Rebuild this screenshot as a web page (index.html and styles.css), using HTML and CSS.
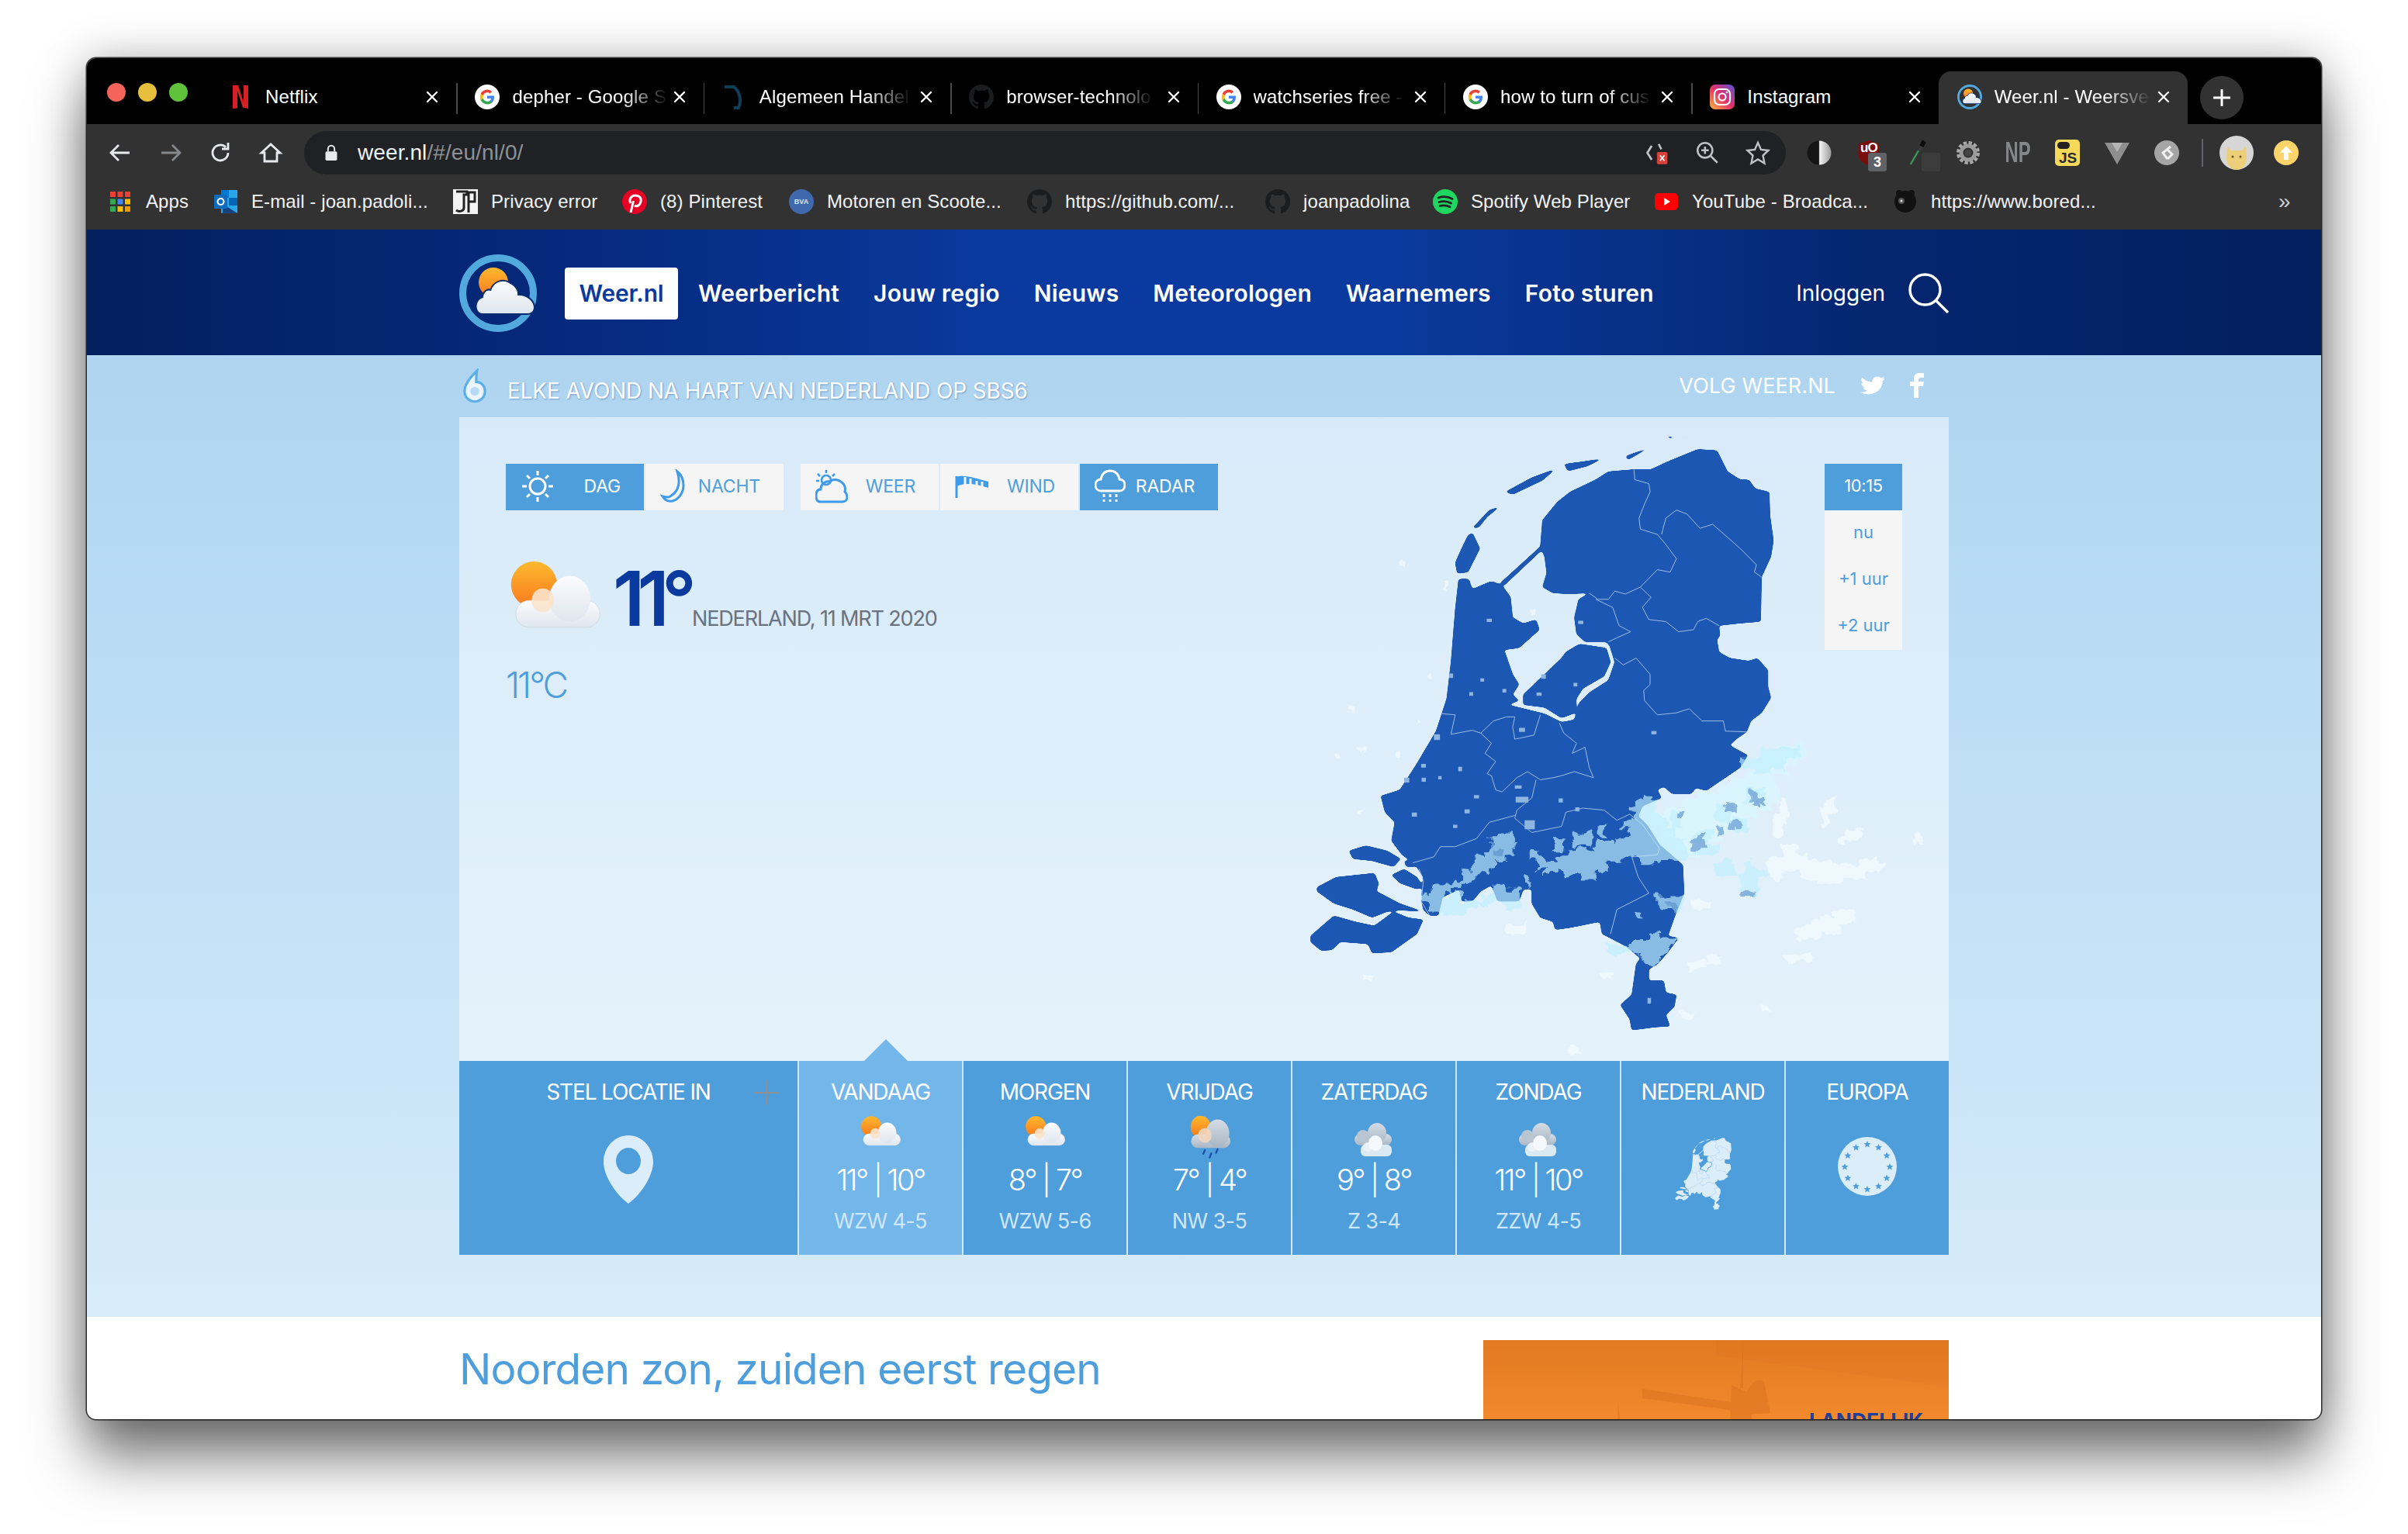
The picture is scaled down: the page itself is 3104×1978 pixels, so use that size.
FILE: index.html
```html
<!DOCTYPE html>
<html lang="nl">
<head>
<meta charset="utf-8">
<title>Weer.nl</title>
<link rel="stylesheet" href="styles.css">
</head>
<body>
<svg class="defs" width="0" height="0" aria-hidden="true">
  <defs>
    <filter id="smooth" x="-5%" y="-5%" width="110%" height="110%">
      <feGaussianBlur stdDeviation="3.500"/>
      <feComponentTransfer><feFuncA type="linear" slope="9" intercept="-3.500"/></feComponentTransfer>
    </filter>
    <filter id="rough" x="-5%" y="-5%" width="110%" height="110%">
      <feTurbulence type="fractalNoise" baseFrequency=".035" numOctaves="3" seed="7" result="n"/>
      <feDisplacementMap in="SourceGraphic" in2="n" scale="30" xChannelSelector="R" yChannelSelector="G"/>
      <feGaussianBlur stdDeviation="1.400"/>
    </filter>
    <linearGradient id="gSun" x1="0" y1="0" x2="0" y2="1"><stop offset="0" stop-color="#fdb92e"/><stop offset="1" stop-color="#f9781d"/></linearGradient>
    <linearGradient id="gCloud" x1="0" y1="0" x2="0" y2="1"><stop offset="0" stop-color="#fbfcfe"/><stop offset="1" stop-color="#dfe6ee"/></linearGradient>
    <linearGradient id="gGrey" x1="0" y1="0" x2="0" y2="1"><stop offset="0" stop-color="#d5dde6"/><stop offset="1" stop-color="#a9b6c4"/></linearGradient>
    <linearGradient id="gInsta" x1="0" y1="1" x2="1" y2="0"><stop offset="0" stop-color="#fdb53b"/><stop offset=".5" stop-color="#e1306c"/><stop offset="1" stop-color="#5b51d8"/></linearGradient>
    <linearGradient id="gMoon" x1="0" y1="0" x2="1" y2="0"><stop offset=".48" stop-color="#151515"/><stop offset=".52" stop-color="#f4f4f4"/><stop offset="1" stop-color="#9a9a9a"/></linearGradient>

    <symbol id="i-suncloud" viewBox="0 0 114 88">
      <ellipse cx="31" cy="32" rx="29" ry="29" fill="url(#gSun)"/>
      <rect x="8" y="52" width="106" height="34" rx="17" fill="url(#gCloud)" stroke="#c8d0d8" stroke-width=".6"/>
      <ellipse cx="76" cy="50" rx="26" ry="29" fill="url(#gCloud)"/>
      <ellipse cx="42" cy="52" rx="14" ry="15" fill="#fbe3cb" opacity=".9"/>
    </symbol>
    <symbol id="i-raincloud" viewBox="0 0 76 82">
      <ellipse cx="20" cy="22" rx="19" ry="21" fill="url(#gSun)"/>
      <rect x="2" y="36" width="74" height="26" rx="13" fill="url(#gGrey)"/>
      <ellipse cx="52" cy="34" rx="22" ry="26" fill="url(#gGrey)"/>
      <ellipse cx="28" cy="38" rx="13" ry="14" fill="#f2d6bd" opacity=".9"/>
      <path d="M28 66l-3 7M40 72l-3 8M52 64l-3 7" stroke="#1f4fa8" stroke-width="3.400" stroke-linecap="round"/>
    </symbol>
    <symbol id="i-clouds" viewBox="0 0 50 43">
      <rect x="0" y="14" width="48" height="15" rx="7.500" fill="url(#gGrey)"/>
      <circle cx="11" cy="17" r="8" fill="#b9c5d1"/>
      <ellipse cx="29" cy="13" rx="12" ry="13" fill="url(#gGrey)"/>
      <rect x="8" y="28" width="40" height="15" rx="6" fill="#dbe9f2"/>
      <circle cx="17" cy="31" r="6" fill="#eaf1f7"/>
      <ellipse cx="27" cy="26" rx="9" ry="10" fill="#f6f9fc"/>
    </symbol>
    <symbol id="i-logo" viewBox="0 0 100 100">
      <circle cx="50" cy="50" r="45.500" fill="none" stroke="#52a9de" stroke-width="9"/>
      <circle cx="44" cy="36" r="19" fill="url(#gSun)"/>
      <path d="M30 76C20 76 20 58 31 56 31 48 37 45 41 47 44 36 56 32 64 37 73 41 76 48 75 53 86 52 96 60 96 68 96 74 92 76 88 76Z" fill="url(#gCloud)" stroke="#0a2c70" stroke-width="4" paint-order="stroke"/>
    </symbol>
    <symbol id="i-g" viewBox="0 0 32 32">
      <circle cx="16" cy="16" r="16" fill="#fff"/>
      <path d="M25 16.300c0-.7-.1-1.300-.2-1.900H16v3.600h5.100c-.2 1.200-.9 2.200-1.900 2.900v2.400h3c1.800-1.600 2.800-4 2.800-7z" fill="#4285f4"/>
      <path d="M16 25.500c2.500 0 4.700-.8 6.200-2.200l-3-2.400c-.8.600-1.900.9-3.200.9-2.400 0-4.500-1.600-5.200-3.900H7.700v2.400c1.500 3.100 4.700 5.200 8.300 5.200z" fill="#34a853"/>
      <path d="M10.800 17.900c-.4-1.200-.4-2.500 0-3.800v-2.400H7.700c-1.300 2.500-1.300 6.100 0 8.600z" fill="#fbbc05"/>
      <path d="M16 10.300c1.400 0 2.600.5 3.500 1.400l2.700-2.700C20.600 7.500 18.500 6.500 16 6.500c-3.600 0-6.800 2.100-8.300 5.200l3.100 2.400c.7-2.200 2.800-3.800 5.200-3.800z" fill="#ea4335"/>
    </symbol>
    <symbol id="i-gh" viewBox="0 0 16 16">
      <path fill="#1b1c1d" d="M8 0C3.580 0 0 3.580 0 8c0 3.540 2.290 6.530 5.470 7.590.4.070.55-.17.55-.38 0-.19-.01-.82-.01-1.490-2.010.37-2.530-.49-2.690-.94-.09-.23-.48-.94-.82-1.130-.28-.15-.68-.52-.01-.53.63-.01 1.080.58 1.230.82.72 1.210 1.870.87 2.330.66.070-.52.280-.87.510-1.070-1.780-.2-3.640-.89-3.640-3.950 0-.87.310-1.590.820-2.150-.080-.2-.36-1.020.080-2.120 0 0 .67-.21 2.200.82.640-.18 1.320-.27 2-.27.68 0 1.360.09 2 .27 1.530-1.040 2.200-.82 2.200-.82.44 1.100.16 1.920.08 2.120.51.560.82 1.270.82 2.150 0 3.070-1.870 3.750-3.650 3.950.29.250.54.730.54 1.480 0 1.070-.01 1.930-.01 2.200 0 .21.15.46.55.38A8.013 8.013 0 0016 8c0-4.420-3.580-8-8-8z"/>
    </symbol>
    <symbol id="i-x" viewBox="0 0 20 20">
      <path d="M4 4l12 12M16 4L4 16" stroke="#fff" stroke-width="2.400" stroke-linecap="round" fill="none"/>
    </symbol>

    <g id="nl-land">
      <path d="M1000 75L1045 78 1070 130 1100 150 1120 150 1135 172 1168 180 1170 240 1178 300 1172 340 1150 390 1148 500 1095 505 1050 510 1052 535 1045 545 1050 575 1075 590 1120 597 1140 590 1165 620 1165 660 1172 688 1150 725 1125 745 1115 772 1090 790 1075 805 1118 830 1100 860 1020 917 995 910 985 925 940 925 920 907 905 915 915 935 870 955 860 980 880 1000 910 1050 965 1100 968 1170 945 1230 930 1275 955 1280 930 1315 905 1345 885 1357 885 1385 920 1385 925 1415 950 1420 945 1450 925 1470 935 1498 900 1500 845 1508 840 1480 818 1445 845 1420 855 1345 865 1330 830 1300 775 1270 770 1240 700 1255 665 1260 660 1240 630 1230 610 1195 610 1160 590 1160 580 1190 530 1190 515 1150 490 1165 470 1190 445 1190 440 1160 400 1180 390 1225 370 1225 355 1210 350 1185 355 1130 335 1098 305 1075 280 1040 288 995 265 970 255 930 300 915 340 850 385 770 410 690 420 600 430 470 438 395 462 395 470 420 515 400 540 410 560 440 565 490 590 505 620 495 628 520 580 565 545 570 565 630 580 655 565 680 580 695 555 705 590 714 640 727 680 748 710 742 722 700 745 675 790 645 805 600 793 560 785 550 735 550 715 530 710 490 720 445 745 430 700 432 660 430 635 415 645 380 640 340 630 315 635 250 670 205 700 180 760 150 790 130 850 125 890 125 930 105Z"/>
      <path d="M722 555L785 565 795 600 780 635 730 665 715 690 712 725 680 738 640 712 590 705 590 680 650 620 680 590 690 575Z"/>
      <path d="M631 314L635 322 544 412 536 405Z"/>
      <path d="M470 280L488 320 460 378 435 382 430 355 445 320 460 288Z"/>
      <path d="M470 270L510 225 537 215 505 242 485 268Z"/>
      <path d="M548 180L610 145 667 123 635 152 565 187Z"/>
      <path d="M686 112L777 98 740 117 695 129Z"/>
      <path d="M831 92L894 68 860 87 835 102Z"/>
      <path d="M923 41L947 46 935 49ZM962 48L972 40 970 50Z"/>
      <path d="M180 1065L220 1052 270 1065 302 1085 285 1105 235 1090 190 1085Z"/>
      <path d="M105 1155L150 1130 240 1120 250 1145 245 1165 300 1195 355 1215 300 1212 270 1215 235 1230 190 1210 145 1195 105 1165Z"/>
      <path d="M90 1275L145 1225 195 1240 240 1250 285 1215 320 1230 355 1235 340 1270 280 1315 235 1318 225 1295 160 1290 140 1310 115 1312 90 1290Z"/>
      <path d="M280 1125L310 1110 340 1130 355 1155 340 1160 300 1145Z"/>
      <path d="M310 1090L330 1088 336 1105 315 1105Z"/>
    </g>
    <g id="nl-lines" fill="none">
      <path d="M850 125L852 150 885 160 888 180 875 210 862 245 865 272 905 285 925 310 950 345 935 378 905 372 865 415 830 432 805 425 790 445 765 445 745 430"/>
      <path d="M915 285L925 245 950 225 975 235 1005 270 1035 260 1100 320 1138 360 1133 378 1150 390"/>
      <path d="M865 415L890 440 870 465 885 495 925 500 955 525 990 520 1000 500 1020 492 1050 510"/>
      <path d="M760 445L800 465 815 510 842 525 810 540 790 550"/>
      <path d="M805 590L825 607 855 590 888 630 888 655 873 670 875 695 905 730 950 725 980 715 1010 745 1060 745 1065 770 1115 772"/>
      <path d="M398 727L430 730 420 778 470 768 490 775 520 745 550 735 570 735 565 760 570 790 615 780 630 730"/>
      <path d="M675 750L685 775 715 800 705 825 735 810 745 860 755 885 710 870 680 880 660 885 630 890 600 870 575 885 540 920 525 915 515 880 505 875 525 845 500 825 515 800 490 775"/>
      <path d="M620 890L610 935 575 965 570 985 610 1020 680 1005 690 970 730 960 780 965 810 990 840 975 870 1000 910 1060 905 1075 845 1080 860 1130 885 1170 810 1210 795 1270"/>
      <path d="M570 978L510 995 480 1035 430 1055 395 1055 380 1080 330 1095M345 1110L355 1140 350 1190 370 1225"/>
    </g>
  </defs>
</svg>

<div class="window">
  <div class="tabstrip">
    <div class="lights"><i class="light red"></i><i class="light yellow"></i><i class="light green"></i></div>
    <div class="tab"><svg class="fav" viewBox="0 0 32 32"><path fill="#d81f26" d="M6 1h7l7 22V1h6v30l-7-1.500L12 8v22.500l-6 .5z"/></svg><span class="title">Netflix</span><svg class="close"><use href="#i-x"/></svg></div>
    <div class="tab"><svg class="fav"><use href="#i-g"/></svg><span class="title fade">depher - Google S</span><svg class="close"><use href="#i-x"/></svg></div>
    <div class="tab"><svg class="fav" viewBox="0 0 32 32"><path fill="none" stroke="#123f58" stroke-width="4" d="M3 3h12c8 6 10 18 6 27h-6"/></svg><span class="title fade">Algemeen Handel</span><svg class="close"><use href="#i-x"/></svg></div>
    <div class="tab"><svg class="fav"><use href="#i-gh"/></svg><span class="title fade">browser-technolo</span><svg class="close"><use href="#i-x"/></svg></div>
    <div class="tab"><svg class="fav"><use href="#i-g"/></svg><span class="title fade">watchseries free -</span><svg class="close"><use href="#i-x"/></svg></div>
    <div class="tab"><svg class="fav"><use href="#i-g"/></svg><span class="title fade">how to turn of cus</span><svg class="close"><use href="#i-x"/></svg></div>
    <div class="tab"><svg class="fav" viewBox="0 0 32 32"><rect width="32" height="32" rx="7" fill="url(#gInsta)"/><rect x="6" y="6" width="20" height="20" rx="6" fill="none" stroke="#fff" stroke-width="2.200"/><circle cx="16" cy="16" r="4.500" fill="none" stroke="#fff" stroke-width="2.200"/><circle cx="22" cy="10" r="1.300" fill="#fff"/></svg><span class="title">Instagram</span><svg class="close"><use href="#i-x"/></svg></div>
    <div class="tab active"><svg class="fav"><use href="#i-logo"/></svg><span class="title fade">Weer.nl - Weersve</span><svg class="close"><use href="#i-x"/></svg></div>
    <div class="newtab"><svg viewBox="0 0 28 28" width="28" height="28"><path d="M14 3v22M3 14h22" stroke="#fff" stroke-width="3"/></svg></div>
  </div>

  <div class="toolbar">
    <div class="navbtn"><svg viewBox="0 0 32 32" width="32" height="32"><path d="M28 16H5M14 6L4 16l10 10" class="stroke-light"/></svg></div>
    <div class="navbtn"><svg viewBox="0 0 32 32" width="32" height="32"><path d="M4 16h23M18 6l10 10-10 10" class="stroke-dim"/></svg></div>
    <div class="navbtn"><svg viewBox="0 0 32 32" width="32" height="32"><path d="M26 16a10 10 0 1 1-3-7.200M26 3v8h-8" class="stroke-light"/></svg></div>
    <div class="navbtn"><svg viewBox="0 0 32 32" width="32" height="32"><path d="M16 5L4 16h4v11h16V16h4z" class="stroke-light"/></svg></div>
    <div class="omnibox">
      <svg class="lock" viewBox="0 0 24 28" width="20" height="24"><path d="M7 12V8a5 5 0 0 1 10 0v4" fill="none" stroke="#e8eaed" stroke-width="2.400"/><rect x="3" y="12" width="18" height="14" rx="2" fill="#e8eaed"/></svg>
      <span class="url">weer.nl<span class="url-path">/#/eu/nl/0/</span></span>
      <div class="omni-actions">
        <div class="navbtn"><svg viewBox="0 0 32 32" width="36" height="36"><path d="M9 8l-5 8 5 8M17 6l3 6" class="stroke-thin"/><rect x="15" y="15" width="12" height="14" rx="1.500" fill="#d9403a"/><path d="M18.500 19l5 6M23.500 19l-5 6" stroke="#fff" stroke-width="1.400"/></svg></div>
        <div class="navbtn"><svg viewBox="0 0 32 32" width="34" height="34"><circle cx="13" cy="13" r="9" class="stroke-thin"/><path d="M13 8.500v9M8.500 13h9M20 20l8 8" class="stroke-thin"/></svg></div>
        <div class="navbtn"><svg viewBox="0 0 32 32" width="32" height="32"><path d="M16 3l4 9 9.500 1-7 6.500 2 10L16 24.500 7.500 29.500l2-10-7-6.500 9.500-1z" class="stroke-thin"/></svg></div>
      </div>
    </div>
    <div class="extensions">
      <div class="navbtn"><svg viewBox="0 0 32 32" width="32" height="32"><circle cx="16" cy="16" r="15.500" fill="url(#gMoon)"/></svg></div>
      <div class="navbtn ext-ub"><svg viewBox="0 0 32 34" width="30" height="32"><path d="M16 0l14 5v16c0 7-8 11-14 13C10 32 2 28 2 21V5z" fill="#7c0b0b"/></svg><span class="ub-text">uO</span><span class="badge">3</span></div>
      <div class="navbtn ext-drop"><svg viewBox="0 0 32 36" width="30" height="34"><path d="M25 2l-4 6-13 21-3 5" stroke="#3a3a3a" stroke-width="4" fill="none"/><path d="M16 15L8 29l-3 5" stroke="#3aa35c" stroke-width="2" fill="none"/><path d="M24 2l-4 7" stroke="#0c0c0c" stroke-width="6"/></svg><i class="badge-empty"></i></div>
      <div class="navbtn"><svg viewBox="0 0 32 32" width="32" height="32"><circle cx="16" cy="16" r="12" fill="none" stroke="#a9a9a9" stroke-width="6" stroke-dasharray="4 2.300"/><circle cx="16" cy="16" r="9" fill="none" stroke="#9b9b9b" stroke-width="5"/><circle cx="16" cy="16" r="4.500" fill="#454545"/></svg></div>
      <div class="navbtn ext-np">NP</div>
      <div class="navbtn"><div class="ext-js"><i class="js-pill"></i><span>JS</span></div></div>
      <div class="navbtn"><svg viewBox="0 0 32 32" width="32" height="32"><path d="M0 3h32L16 31z" fill="#8f8f8f"/><path d="M9 3h14l-7 12z" fill="#b5b5b5"/></svg></div>
      <div class="navbtn"><svg viewBox="0 0 32 32" width="32" height="32"><circle cx="16" cy="16" r="16" fill="#a5a5a5"/><path d="M21 8L11 16l6 8M17 12l6 6-6 6" fill="none" stroke="#f0f0f0" stroke-width="3"/></svg></div>
      <i class="ext-sep"></i>
      <div class="avatar"><svg viewBox="0 0 44 44" width="44" height="44"><circle cx="22" cy="22" r="22" fill="#d6d6d6"/><path d="M10 14l5 5h14l5-5 1 14c0 10-6 16-13 16S9 38 9 28z" fill="#edcf79"/><circle cx="17" cy="27" r="1.500" fill="#6c5330"/><circle cx="27" cy="27" r="1.500" fill="#6c5330"/></svg></div>
      <div class="update"><svg viewBox="0 0 32 32" width="32" height="32"><circle cx="16" cy="16" r="16" fill="#fcd46a"/><path d="M16 7l8 9h-5v9h-6v-9H8z" fill="#fff"/></svg></div>
    </div>
  </div>

  <div class="bookmarks">
    <div class="bm"><svg class="bm-ico" viewBox="0 0 32 32"><g><rect x="3" y="3" width="7" height="7" fill="#e94235"/><rect x="12.500" y="3" width="7" height="7" fill="#e94235"/><rect x="22" y="3" width="7" height="7" fill="#e94235"/><rect x="3" y="12.500" width="7" height="7" fill="#34a853"/><rect x="12.500" y="12.500" width="7" height="7" fill="#4285f4"/><rect x="22" y="12.500" width="7" height="7" fill="#fbbc05"/><rect x="3" y="22" width="7" height="7" fill="#34a853"/><rect x="12.500" y="22" width="7" height="7" fill="#fbbc05"/><rect x="22" y="22" width="7" height="7" fill="#f29900"/></g></svg><span>Apps</span></div>
    <div class="bm"><svg class="bm-ico" viewBox="0 0 32 32"><rect x="10" y="1" width="21" height="30" rx="1" fill="#28a8ea"/><rect x="10" y="1" width="10" height="10" fill="#0078d4"/><rect x="20" y="11" width="11" height="10" fill="#0364b8"/><path d="M12 19l19 12H12z" fill="#14447d"/><rect x="1" y="7" width="17" height="18" rx="1" fill="#0f6cbd"/><circle cx="9.500" cy="16" r="4" fill="none" stroke="#fff" stroke-width="2"/></svg><span>E-mail - joan.padoli...</span></div>
    <div class="bm"><svg class="bm-ico" viewBox="0 0 32 32"><rect width="32" height="32" fill="#f4f4f4"/><path d="M4 3h14v4h-4v17c0 4-6 6-10 3M20 4h8v12h-8zM20 16v14" fill="none" stroke="#222" stroke-width="3"/></svg><span>Privacy error</span></div>
    <div class="bm"><svg class="bm-ico" viewBox="0 0 32 32"><circle cx="16" cy="16" r="16" fill="#e60023"/><path d="M11 30l3.500-15M11 18c-3-5 1-10 6-10s8 3 7 8-5 7-8 5" fill="none" stroke="#fff" stroke-width="3"/></svg><span>(8) Pinterest</span></div>
    <div class="bm"><div class="bva"><b>BVA</b></div><span>Motoren en Scoote...</span></div>
    <div class="bm"><svg class="bm-ico"><use href="#i-gh"/></svg><span>https://github.com/...</span></div>
    <div class="bm"><svg class="bm-ico"><use href="#i-gh"/></svg><span>joanpadolina</span></div>
    <div class="bm"><svg class="bm-ico" viewBox="0 0 32 32"><circle cx="16" cy="16" r="16" fill="#1ed760"/><path d="M7 11c6-2 13-1.500 18 1.500M8 16.500c5-1.500 11-1 15.500 1.500M9 21.500c4-1 9-.8 13 1.300" fill="none" stroke="#222" stroke-width="2.700" stroke-linecap="round"/></svg><span>Spotify Web Player</span></div>
    <div class="bm"><svg class="bm-ico" viewBox="0 0 32 32"><rect x="1" y="5" width="30" height="22" rx="5" fill="#ff0000"/><path d="M13 11l8 5-8 5z" fill="#fff"/></svg><span>YouTube - Broadca...</span></div>
    <div class="bm"><svg class="bm-ico" viewBox="0 0 32 32"><circle cx="16" cy="16" r="14" fill="#111"/><circle cx="8" cy="5" r="4" fill="#111"/><circle cx="24" cy="5" r="4" fill="#111"/><circle cx="11" cy="15" r="4" fill="#555"/><circle cx="11" cy="15" r="1.500" fill="#ddd"/></svg><span>https://www.bored...</span></div>
    <div class="bm-more">»</div>
  </div>

  <header class="site-header">
    <div class="container header-inner">
      <svg class="site-logo"><use href="#i-logo"/></svg>
      <a class="brand">Weer.nl</a>
      <nav class="nav">
        <a>Weerbericht</a><a>Jouw regio</a><a>Nieuws</a><a>Meteorologen</a><a>Waarnemers</a><a>Foto sturen</a>
      </nav>
      <a class="login">Inloggen</a>
      <svg class="search" viewBox="0 0 52 52" width="52" height="52"><circle cx="21.500" cy="21.500" r="19.500" fill="none" stroke="#fff" stroke-width="3.400"/><path d="M35 35l16 16" stroke="#fff" stroke-width="3.400"/></svg>
    </div>
  </header>

  <main class="hero">
    <div class="container">
      <div class="subbar">
        <svg class="six" viewBox="0 0 34 46" width="32" height="46"><path d="M20 2C11 11 3 20 3 30a14 14 0 0 0 28 0c0-8-6-13-12-13 0-5 0-10 1-15z" fill="#eaf5fd" stroke="#5cb0ea" stroke-width="3.400"/><circle cx="17" cy="30" r="6" fill="#b6daf4"/></svg>
        <span class="promo">ELKE AVOND NA HART VAN NEDERLAND OP SBS6</span>
        <span class="follow">VOLG WEER.NL</span>
        <svg class="tw" viewBox="0 0 24 24" width="32" height="28" preserveAspectRatio="none"><path fill="#fff" d="M23.953 4.570a10 10 0 01-2.825.775 4.958 4.958 0 002.163-2.723c-.951.555-2.005.959-3.127 1.184a4.920 4.920 0 00-8.384 4.482C7.690 8.095 4.067 6.130 1.640 3.162a4.822 4.822 0 00-.666 2.475c0 1.710.870 3.213 2.188 4.096a4.904 4.904 0 01-2.228-.616v.060a4.923 4.923 0 003.946 4.827 4.996 4.996 0 01-2.212.085 4.936 4.936 0 004.604 3.417 9.867 9.867 0 01-6.102 2.105c-.390 0-.779-.023-1.170-.067a13.995 13.995 0 007.557 2.209c9.053 0 13.998-7.496 13.998-13.985 0-.210 0-.420-.015-.630A9.935 9.935 0 0024 4.590z"/></svg>
        <svg class="fb" viewBox="0 0 18 32" width="18" height="32"><path fill="#fff" d="M5 32V17H0v-6h5V7c0-5 3-7 7-7h6v6h-4c-2 0-3 1-3 3v2h7l-1 6h-6v15z"/></svg>
      </div>

      <section class="panel">
        <svg class="nlmap" viewBox="0 0 1568 1568" preserveAspectRatio="none">
          <g class="land"><use href="#nl-land"/></g>
          <g class="lines"><use href="#nl-lines"/></g>
          <g class="spots">
            <rect x="504" y="493" width="12" height="8"/><rect x="719" y="498" width="12" height="8"/><rect x="632" y="630" width="11" height="11"/><rect x="708" y="651" width="9" height="9"/><rect x="621" y="675" width="12" height="8"/><rect x="489" y="640" width="9" height="8"/><rect x="463" y="674" width="9" height="9"/><rect x="541" y="666" width="9" height="9"/><rect x="416" y="628" width="9" height="11"/><rect x="891" y="770" width="12" height="8"/><rect x="380" y="778" width="14" height="14"/><rect x="350" y="851" width="11" height="9"/><rect x="437" y="858" width="9" height="11"/><rect x="351" y="885" width="10" height="10"/><rect x="390" y="881" width="8" height="8"/><rect x="310" y="885" width="12" height="12"/><rect x="570" y="904" width="16" height="8"/><rect x="474" y="928" width="12" height="8"/><rect x="572" y="932" width="30" height="14"/><rect x="673" y="936" width="10" height="10"/><rect x="328" y="971" width="12" height="10"/><rect x="452" y="963" width="12" height="10"/><rect x="425" y="1001" width="10" height="8"/><rect x="580" y="762" width="14" height="10"/><rect x="882" y="1428" width="8" height="14"/><rect x="593" y="990" width="24" height="22"/><rect x="712" y="958" width="10" height="10"/>
          </g>
          <g class="radar-faint">
            <path d="M1165 1080h30v-30h40v20h25v20h60v10h60v-15h40v10h20v20h-40v20h-60v15h-60v-15h-40v-20h-40v20h-35zM1180 1030v-60h15v-30h15v60h-10v30zM1290 1000v-40h15v-25h15v40h-10v25zM1230 1280v-30h40v-20h50v-15h50v30h-35v20h-50v15zM975 1360v-25h50v-15h30v25h-40v15zM1205 1340v-20h60v20zM1510 1050v-30h15v30zM1330 1050v-20h20v-20h30v30h-30v10zM770 1385v-20h30v20zM550 1270v-25h45v25zM1150 1465v-20h20v20zM960 1475v-15h35v15zM210 1390v-15h25v15zM700 1565v-20h25v20z"/>
            <rect x="296" y="350" width="12" height="14"/><rect x="182" y="710" width="12" height="12"/><rect x="205" y="812" width="12" height="12"/><rect x="150" y="826" width="10" height="10"/><rect x="368" y="628" width="10" height="12"/><rect x="338" y="742" width="10" height="10"/><rect x="400" y="408" width="10" height="10"/><rect x="612" y="475" width="10" height="12"/><rect x="200" y="966" width="10" height="12"/><rect x="292" y="826" width="10" height="10"/><rect x="985" y="1190" width="45" height="18"/>
          </g>
          <g class="radar-pale">
            <path d="M885 1005v-30h35v-20h40v-15h40v-20h50v-15h30v-20h30v-20h15v-20h20v-15h25v-10h25v-15h40v-10h20v40h-15v20h-30v20h-30v40h10v30h-20v20h-30v20h-20v15h-20v20h-40v20h-40v20h-15v20h-30v-15h-35v-35h-25v-30z"/>
          </g>
          <g class="radar">
            <path d="M1105 855v-20h40v-15h30v-10h60v35h-30v15h-30v15h-50v-15h-20zM1110 945v-35h50v45h-40zM1040 990v-35h40v40h-30zM990 1070v-55h40v35h20v20zM935 1010v-45h30v40zM1085 1015v-35h30v40h-25z"/>
            <path d="M350 1190v-20h25v-20h50v-15h20v-25h25v-30h30v-15h15v-30h15v-15h35v25h5v30h-20v15h-25v20h-20v15h-30v20h-30v10h-20v10h-15v50h-40v-25h-20z"/>
            <path d="M595 1160v-30h45v-20h-20v-35h20v20h25v-20h30v-15h65v-20h40v-5h40v-25h-15v-20h30v-20h-15v-15h15v-15h20v-15h15v15h15v40h20v30h25v25h25v55h-60v10h-50v-20h-40v15h-40v20h-25v20h-35v-10h-40v-10h-30v15h-45z"/>
            <path d="M660 1060v-25h25v25zM705 1055v-35h45v35zM765 1030v-25h20v25zM605 1085v-20h25v20zM905 1215v-40h60v40zM855 1230v-15h15v15z"/>
            <path d="M1045 1130v-35h15v-10h20v10h10v35zM1095 1160v-40h15v-30h20v20h30v20h-20v50h-30v-20z"/>
            <path d="M400 1225v-45h20v-15h25v25h45v-15h25v-30h30v15h40v50h-40v-15h-60v15h-35v15z"/>
            <path d="M780 1320v-20h60v-15h45v-20h25v15h45l-20 30-25 25-20 25-20-20-10-20-30-5-20 5z"/>
          </g>
          <g class="radar-dark">
            <path d="M1120 950v-35h15v15h25v20h-15v10h-20v-10zM985 1060v-20h15v-15h15v15h5v20zM1065 970v-25h25v25zM1075 1010v-20h25v20zM950 985v-20h15v20zM1045 1025v-20h15v20zM1100 1160h35v20h-30v-5h-5zM525 1075v-15h20v15zM925 1205v-15h25v25h-15v-10z"/>
          </g>
        </svg>

        <div class="modes">
          <div class="seg">
            <div class="mode on"><svg class="ico" viewBox="0 0 44 44" width="44" height="44"><circle cx="22" cy="22" r="10" fill="none" stroke="#fff" stroke-width="3"/><path d="M22 2v6M22 36v6M2 22h6M36 22h6M8 8l4 4M32 32l4 4M36 8l-4 4M12 32l-4 4" stroke="#fff" stroke-width="3"/></svg><span>DAG</span></div>
            <div class="mode"><svg class="ico" viewBox="0 0 36 44" width="36" height="44"><path d="M22 3c4 12 3 25-9 32-3 2-7 1-10 0 3 5 8 7 13 6 8-2 14-11 14-20 0-8-3-14-8-18z" fill="none" stroke="#3c9bea" stroke-width="3"/></svg><span>NACHT</span></div>
          </div>
          <div class="seg">
            <div class="mode"><svg class="ico" viewBox="0 0 42 44" width="42" height="44"><circle cx="14" cy="14" r="6" fill="none" stroke="#3c9bea" stroke-width="2.600"/><path d="M14 1v4M3 6l3 3M1 15h4M25 6l-3 3" stroke="#3c9bea" stroke-width="2.600"/><path d="M6 42c-4 0-5-4-5-8 0-5 2-8 6-8 0-7 6-11 12-10 3-4 11-3 15 1 4 3 5 8 4 12 2 2 3 4 3 7 0 4-3 6-6 6z" fill="none" stroke="#3c9bea" stroke-width="3"/></svg><span>WEER</span></div>
            <div class="mode"><svg class="ico" viewBox="0 0 44 34" width="44" height="34"><path d="M2 32V4" stroke="#3c9bea" stroke-width="3"/><path d="M2 5c10-4 28 3 41 6v8C30 15 14 11 2 17z" fill="#3c9bea"/><path d="M13 5v10M20 7v11M28 10v9M35 11v9" stroke="#f5f5f5" stroke-width="3"/></svg><span>WIND</span></div>
            <div class="mode on"><svg class="ico" viewBox="0 0 40 44" width="40" height="44"><path d="M8 28c-4 0-7-3-7-8 0-4 3-7 7-7 1-7 6-11 12-11s11 4 12 11c4 0 7 3 7 7 0 5-3 8-7 8z" fill="none" stroke="#fff" stroke-width="2.800"/><path d="M12 32v4M20 32v4M28 32v4M12 39v3M20 39v3M28 39v3" stroke="#fff" stroke-width="2.800"/></svg><span>RADAR</span></div>
          </div>
        </div>

        <div class="current">
          <svg class="cur-icon"><use href="#i-suncloud"/></svg>
          <div class="cur-temp">11°</div>
          <div class="cur-place">NEDERLAND, 11 MRT 2020</div>
        </div>
        <div class="cur-small">11°C</div>

        <div class="times">
          <div class="time on">10:15</div>
          <div class="time">nu</div>
          <div class="time">+1 uur</div>
          <div class="time">+2 uur</div>
        </div>
      </section>

      <section class="days">
        <div class="day loc">
          <div class="d-label">STEL LOCATIE IN</div>
          <svg class="plus" viewBox="0 0 32 32" width="32" height="32"><path d="M16 0v32M0 16h32" stroke="#8f8f8f" stroke-width="2.200"/></svg>
          <svg class="pin" viewBox="0 0 64 88" width="64" height="88"><path fill-rule="evenodd" fill="#dcedfa" d="M32 0c18 0 32 16 32 34 0 20-18 44-32 54C18 78 0 54 0 34 0 16 14 0 32 0zm0 16c-9 0-16 8-16 17s7 17 16 17 16-8 16-17-7-17-16-17z"/></svg>
        </div>
        <div class="day today">
          <div class="d-label">VANDAAG</div>
          <div class="d-icon"><svg class="sc"><use href="#i-suncloud"/></svg></div>
          <div class="d-temp">11° | 10°</div>
          <div class="d-wind">WZW 4-5</div>
        </div>
        <div class="day">
          <div class="d-label">MORGEN</div>
          <div class="d-icon"><svg class="sc"><use href="#i-suncloud"/></svg></div>
          <div class="d-temp">8° | 7°</div>
          <div class="d-wind">WZW 5-6</div>
        </div>
        <div class="day">
          <div class="d-label">VRIJDAG</div>
          <div class="d-icon"><svg class="rn"><use href="#i-raincloud"/></svg></div>
          <div class="d-temp">7° | 4°</div>
          <div class="d-wind">NW 3-5</div>
        </div>
        <div class="day">
          <div class="d-label">ZATERDAG</div>
          <div class="d-icon"><svg class="cl"><use href="#i-clouds"/></svg></div>
          <div class="d-temp">9° | 8°</div>
          <div class="d-wind">Z 3-4</div>
        </div>
        <div class="day">
          <div class="d-label">ZONDAG</div>
          <div class="d-icon"><svg class="cl"><use href="#i-clouds"/></svg></div>
          <div class="d-temp">11° | 10°</div>
          <div class="d-wind">ZZW 4-5</div>
        </div>
        <div class="day">
          <div class="d-label">NEDERLAND</div>
          <svg class="mini" viewBox="85 40 1095 1470" preserveAspectRatio="none"><g class="mini-land"><use href="#nl-land"/></g><g class="mini-lines"><use href="#nl-lines"/></g></svg>
        </div>
        <div class="day">
          <div class="d-label">EUROPA</div>
          <svg class="eu" viewBox="0 0 76 76" width="76" height="76">
            <circle cx="38" cy="38" r="38" fill="#dcedfa"/>
            <g fill="#4e9edc">
              <path d="M38 5l1.300 2.900 3.200.3-2.400 2.100.7 3.200-2.800-1.700-2.800 1.700.7-3.200-2.400-2.100 3.200-.3z"/>
              <path d="M52.500 9l1.300 2.900 3.200.3-2.400 2.100.7 3.200-2.800-1.700-2.800 1.700.7-3.200-2.400-2.100 3.200-.3z"/>
              <path d="M63.100 19.500l1.300 2.900 3.200.3-2.400 2.100.7 3.200-2.800-1.700-2.800 1.700.7-3.200-2.400-2.100 3.200-.3z"/>
              <path d="M67 34l1.300 2.900 3.200.3-2.400 2.100.7 3.200-2.800-1.700-2.800 1.700.7-3.200-2.400-2.100 3.200-.3z"/>
              <path d="M63.100 48.500l1.300 2.900 3.200.3-2.400 2.100.7 3.200-2.800-1.700-2.800 1.700.7-3.200-2.400-2.100 3.200-.3z"/>
              <path d="M52.500 59l1.300 2.900 3.200.3-2.400 2.100.7 3.200-2.800-1.700-2.800 1.700.7-3.200-2.400-2.100 3.200-.3z"/>
              <path d="M38 63l1.300 2.900 3.200.3-2.400 2.100.7 3.200-2.800-1.700-2.800 1.700.7-3.200-2.400-2.100 3.200-.3z"/>
              <path d="M23.500 59l1.300 2.900 3.200.3-2.400 2.100.7 3.200-2.800-1.700-2.800 1.700.7-3.200-2.400-2.100 3.200-.3z"/>
              <path d="M12.900 48.500l1.300 2.900 3.200.3-2.400 2.100.7 3.200-2.800-1.700-2.800 1.700.7-3.200-2.400-2.100 3.200-.3z"/>
              <path d="M9 34l1.300 2.900 3.200.3-2.400 2.100.7 3.200-2.800-1.700-2.800 1.700.7-3.200-2.400-2.100 3.200-.3z"/>
              <path d="M12.900 19.500l1.300 2.900 3.200.3-2.400 2.100.7 3.200-2.800-1.700-2.800 1.700.7-3.200-2.400-2.100 3.200-.3z"/>
              <path d="M23.500 9l1.300 2.900 3.200.3-2.400 2.100.7 3.200-2.800-1.700-2.800 1.700.7-3.200-2.400-2.100 3.200-.3z"/>
            </g>
          </svg>
        </div>
      </section>
    </div>
  </main>

  <section class="news">
    <div class="container news-inner">
      <h1 class="headline">Noorden zon, zuiden eerst regen</h1>
      <div class="promo-img">
        <svg class="mill" viewBox="0 0 600 110" width="600" height="110"><path d="M335 0l-4 62h4zM320 58l22 10 6 42h-30zM205 63l120 18v10l-120-16zM340 68c4-14 14-20 22-14l8 40-34 2zM174 80l3 30h-4z" fill="#d66f1f" opacity=".45"/><path d="M300 0h300v60L300 20z" fill="#d66f1f" opacity=".12"/></svg>
        <span class="landelijk">LANDELIJK</span>
      </div>
    </div>
  </section>
</div>
</body>
</html>
```

FILE: styles.css
```css
* { box-sizing: border-box; }
html, body { margin: 0; height: 100%; }
body {
  background: #fff;
  padding-top: 75px;
  overflow: hidden;
  font-family: "Inter", "Liberation Sans", sans-serif;
}
.defs { position: absolute; }

.window {
  width: 2880px;
  height: 1755px;
  margin: 0 auto;
  border-radius: 12px;
  overflow: hidden;
  position: relative;
  background: #fff;
  box-shadow: 0 0 0 1.500px rgba(0,0,0,.75), 0 50px 72px rgba(0,0,0,.52), 0 0 56px rgba(0,0,0,.26);
}

/* tab strip */
.tabstrip {
  height: 85px;
  background: #000;
  display: flex;
  padding-top: 17px;
  font-family: "Liberation Sans", sans-serif;
}
.lights {
  width: 158px;
  flex: none;
  display: flex;
  gap: 16px;
  padding: 15px 0 0 26px;
}
.light { width: 24px; height: 24px; border-radius: 50%; }
.light.red { background: #f4645a; }
.light.yellow { background: #e8bf3d; }
.light.green { background: #5fc13c; }

.tab {
  flex: 0 0 318.400px;
  height: 68px;
  display: flex;
  align-items: center;
  position: relative;
  color: #fff;
  font-size: 24px;
  letter-spacing: .15px;
  padding: 0 21px 2px 24px;
}
.tab + .tab::before {
  content: "";
  position: absolute;
  left: 0;
  top: 15px;
  height: 40px;
  width: 1.500px;
  background: #4a4a4a;
}
.tab.active::before { display: none; }
.tab.active {
  flex-basis: 321px;
  background: #323233;
  border-radius: 16px 16px 0 0;
}
.fav { width: 32px; height: 32px; flex: none; }
.title {
  margin-left: 16px;
  white-space: nowrap;
}
.title.fade {
  -webkit-mask-image: linear-gradient(90deg, #000 72%, rgba(0,0,0,.05) 100%);
  mask-image: linear-gradient(90deg, #000 72%, rgba(0,0,0,.05) 100%);
}
.close { width: 20px; height: 20px; margin-left: auto; flex: none; }
.newtab {
  width: 56px;
  height: 56px;
  margin: 6px 0 0 16px;
  border-radius: 50%;
  background: #323233;
  display: flex;
  align-items: center;
  justify-content: center;
}

/* toolbar */
.toolbar {
  height: 76px;
  background: #323233;
  display: flex;
  align-items: center;
  padding: 0 0 2px 11px;
}
.navbtn {
  width: 64.500px;
  height: 48px;
  flex: none;
  display: flex;
  align-items: center;
  justify-content: center;
  position: relative;
}
.stroke-light, .stroke-dim, .stroke-thin { fill: none; stroke-width: 2.800; }
.stroke-light { stroke: #e8eaed; }
.stroke-dim { stroke: #85888c; }
.stroke-thin { stroke: #bfc2c6; stroke-width: 2.400; }

.omnibox {
  width: 1910px;
  height: 56px;
  margin-left: 11px;
  background: #202124;
  border-radius: 28px;
  display: flex;
  align-items: center;
  padding: 0 4px 0 25px;
  font-family: "Liberation Sans", sans-serif;
  font-size: 28px;
}
.url { margin-left: 24px; color: #f1f3f4; letter-spacing: .1px; }
.url-path { color: #8e9195; }
.omni-actions { display: flex; margin-left: auto; }
.extensions { display: flex; align-items: center; margin-left: 11px; }
.extensions .navbtn { width: 64px; }
.ub-text {
  position: absolute;
  left: 21px;
  top: 8px;
  color: #fff;
  font: 700 17px "Liberation Sans", sans-serif;
  letter-spacing: -1px;
}
.badge {
  position: absolute;
  left: 31px;
  top: 24px;
  width: 24px;
  height: 24px;
  border-radius: 3px;
  background: #5f6368;
  color: #fff;
  font: 700 18px/24px "Liberation Sans", sans-serif;
  text-align: center;
}
.badge-empty {
  position: absolute;
  left: 36px;
  top: 24px;
  width: 24px;
  height: 24px;
  border-radius: 3px;
  background: #3c3c3d;
}
.ext-np {
  color: #85878a;
  font: 700 36px "Liberation Sans", sans-serif;
  transform: scaleX(.66);
}
.ext-js {
  width: 32px;
  height: 34px;
  border-radius: 5px;
  background: #f6d95a;
  color: #2b2b2b;
  font: 700 19px/20px "Liberation Sans", sans-serif;
  position: relative;
  padding: 14px 0 0 5px;
}
.js-pill {
  position: absolute;
  left: 3px;
  top: 3px;
  width: 16px;
  height: 9px;
  border-radius: 5px;
  background: #222;
}
.ext-sep { width: 1.500px; height: 36px; background: #5f6368; margin: 0 21px 0 13px; }
.avatar { width: 44px; height: 44px; flex: none; margin-right: 26px; }
.update { width: 32px; height: 32px; flex: none; }

/* bookmarks */
.bookmarks {
  height: 60px;
  background: #323233;
  display: flex;
  align-items: center;
  padding: 0 0 12px 27px;
  font: 24px "Liberation Sans", sans-serif;
  letter-spacing: .1px;
  color: #f1f3f4;
  position: relative;
}
.bm { display: flex; align-items: center; flex: none; white-space: nowrap; }
.bm-ico, .bva { width: 32px; height: 32px; flex: none; margin-right: 17px; }
.bva {
  border-radius: 50%;
  background: #4069ad;
  color: #dfe7f3;
  font-size: 9px;
  line-height: 32px;
  text-align: center;
}
.bm:nth-child(1) { width: 136px; }
.bm:nth-child(2) { width: 309px; }
.bm:nth-child(3) { width: 218px; }
.bm:nth-child(4) { width: 215px; }
.bm:nth-child(5) { width: 307px; }
.bm:nth-child(6) { width: 307px; }
.bm:nth-child(7) { width: 216px; }
.bm:nth-child(8) { width: 285px; }
.bm:nth-child(9) { width: 308px; }
.bm:nth-child(10) { width: 497px; }
.bm-more { font-size: 28px; color: #cfd1d3; }

/* site header */
.container { width: 1920px; margin: 0 auto; }
.site-header {
  height: 162px;
  background: linear-gradient(90deg, #03205f 0%, #05287a 20%, #0a3aa0 42%, #0a3a9e 58%, #042670 80%, #03205f 100%);
}
.header-inner { height: 162px; display: flex; align-items: center; padding-top: 2px; }
.site-logo { width: 100px; height: 100px; flex: none; }
.brand {
  width: 146px;
  height: 67px;
  margin-left: 36px;
  background: #fff;
  border-radius: 4px;
  color: #0a3a9e;
  font-size: 30px;
  font-weight: 600;
  line-height: 66px;
  text-align: center;
  letter-spacing: -.2px;
}
.nav {
  display: flex;
  gap: 44px;
  margin-left: 26px;
  color: #fff;
  font-size: 30px;
  font-weight: 600;
  letter-spacing: .2px;
}
.login {
  margin-left: auto;
  color: #fff;
  font-size: 28px;
  font-weight: 400;
}
.search { margin-left: 30px; flex: none; }

/* hero */
.hero {
  height: 1240px;
  background: linear-gradient(180deg, #aed4f0 0%, #b7dbf4 25%, #cde6f8 80%, #d8ecf9 100%);
  padding-bottom: 80px;
}
.subbar {
  height: 80px;
  display: flex;
  align-items: center;
  color: #fff;
}
.six { margin-left: 4px; flex: none; }
.promo {
  margin-left: 26px;
  font-size: 28px;
  font-weight: 400;
  margin-top: 12px;
  text-shadow: 1px 1px 2px rgba(60,110,170,.55);
  letter-spacing: -.15px;
}
.follow { margin-left: auto; font-size: 27px; margin-top: -2px; letter-spacing: .1px; }
.tw { margin: -2px 0 0 32px; flex: none; }
.fb { margin: -2px 32px 0 32px; flex: none; }

.panel {
  height: 830px;
  padding: 60px;
  position: relative;
  background: linear-gradient(180deg, #d8eaf9 0%, #e4f2fb 100%);
}
.nlmap { position: absolute; left: 1048px; top: 2px; width: 860px; height: 820px; overflow: visible; }
.land { fill: #1f59b3; filter: url(#smooth); }
.lines { stroke: #c4d8f0; stroke-width: 1.700; opacity: .85; }
.spots { fill: #8fb6e0; }
.radar-faint { fill: #f8feff; opacity: .6; filter: url(#rough); }
.radar-pale { fill: #d9f9ff; opacity: .62; filter: url(#rough); }
.radar { fill: #c0f0ff; opacity: .66; filter: url(#rough); }
.radar-dark { fill: #5a8fcb; opacity: .62; filter: url(#rough); }

.modes { display: flex; gap: 22px; position: relative; }
.seg { display: flex; gap: 2px; }
.mode {
  width: 178px;
  height: 60px;
  background: #f5f5f5;
  color: #4e9edc;
  font-size: 23px;
  letter-spacing: -.2px;
  display: flex;
  align-items: center;
  justify-content: space-between;
  padding: 0 30px 2px 19px;
}
.mode.on { background: #4e9edc; color: #fff; }
.current {
  display: flex;
  align-items: flex-end;
  height: 90px;
  margin-top: 63px;
  position: relative;
}
.cur-icon { width: 118px; height: 90px; flex: none; margin: 0 16px 0 4px; }
.cur-temp {
  color: #0a3a9e;
  font-size: 98px;
  font-weight: 600;
  line-height: 90px;
  letter-spacing: -10px;
  width: 102px;
  flex: none;
  margin-bottom: -6px;
}
.cur-place {
  color: #69727f;
  font-size: 27px;
  letter-spacing: -1.150px;
  margin-bottom: -3px;
}
.cur-small {
  margin-top: 42px;
  color: #4e9edc;
  font-size: 46px;
  font-weight: 300;
  letter-spacing: -3px;
  line-height: 60px;
}
.times { position: absolute; right: 60px; top: 60px; width: 100px; }
.time {
  height: 60px;
  background: #f5f5f5;
  color: #4e9edc;
  font-size: 22px;
  line-height: 56px;
  text-align: center;
}
.time.on { background: #4e9edc; color: #fff; letter-spacing: -.4px; }

/* day strip */
.days { display: flex; height: 250px; gap: 2px; position: relative; }
.day {
  flex: 1 1 0;
  background: #4e9edc;
  color: #fff;
  display: flex;
  flex-direction: column;
  align-items: center;
  padding-top: 20px;
  position: relative;
}
.day.loc { flex: 0 0 436px; }
.day.today { background: #73b6ea; }
.day.today::before {
  content: "";
  position: absolute;
  left: 84px;
  top: -28px;
  border: solid transparent;
  border-width: 0 28px 28px;
  border-bottom-color: #73b6ea;
}
.d-label { font-size: 28px; line-height: 40px; letter-spacing: -1.150px; white-space: nowrap; }
.plus { position: absolute; right: 24px; top: 25px; }
.pin { margin-top: 36px; }
.d-icon { height: 60px; margin-top: 10px; display: flex; justify-content: center; align-items: flex-start; }
.sc { width: 52px; height: 40px; }
.rn { width: 52px; height: 56px; margin-left: 2px; }
.cl { width: 50px; height: 43px; margin-top: 10px; }
.d-temp { font-size: 38px; line-height: 44px; margin-top: 1px; font-weight: 300; letter-spacing: -2.500px; white-space: nowrap; }
.d-wind { font-size: 27px; line-height: 40px; margin-top: 12px; color: #cfe6f8; letter-spacing: -.6px; white-space: nowrap; }
.mini { width: 73px; height: 95px; margin-top: 37px; }
.mini-land { fill: #dcedfa; }
.mini-lines { stroke: #a8cdec; stroke-width: 8; }
.eu { margin-top: 38px; }

/* news */
.news { height: 132px; overflow: hidden; }
.news-inner { display: flex; justify-content: space-between; }
.headline {
  margin: 30px 0 0;
  color: #4e9edc;
  font-size: 55px;
  font-weight: 400;
  line-height: 74px;
  letter-spacing: -.9px;
}
.promo-img {
  width: 600px;
  height: 220px;
  margin-top: 30px;
  background: linear-gradient(180deg, #e27a21 0%, #f78d30 60%, #fa9033 100%);
  position: relative;
  overflow: hidden;
}
.mill { display: block; }
.landelijk {
  position: absolute;
  left: 420px;
  top: 86px;
  color: #1f3f9a;
  font-size: 26.500px;
  font-weight: 700;
  line-height: 36px;
}
```
